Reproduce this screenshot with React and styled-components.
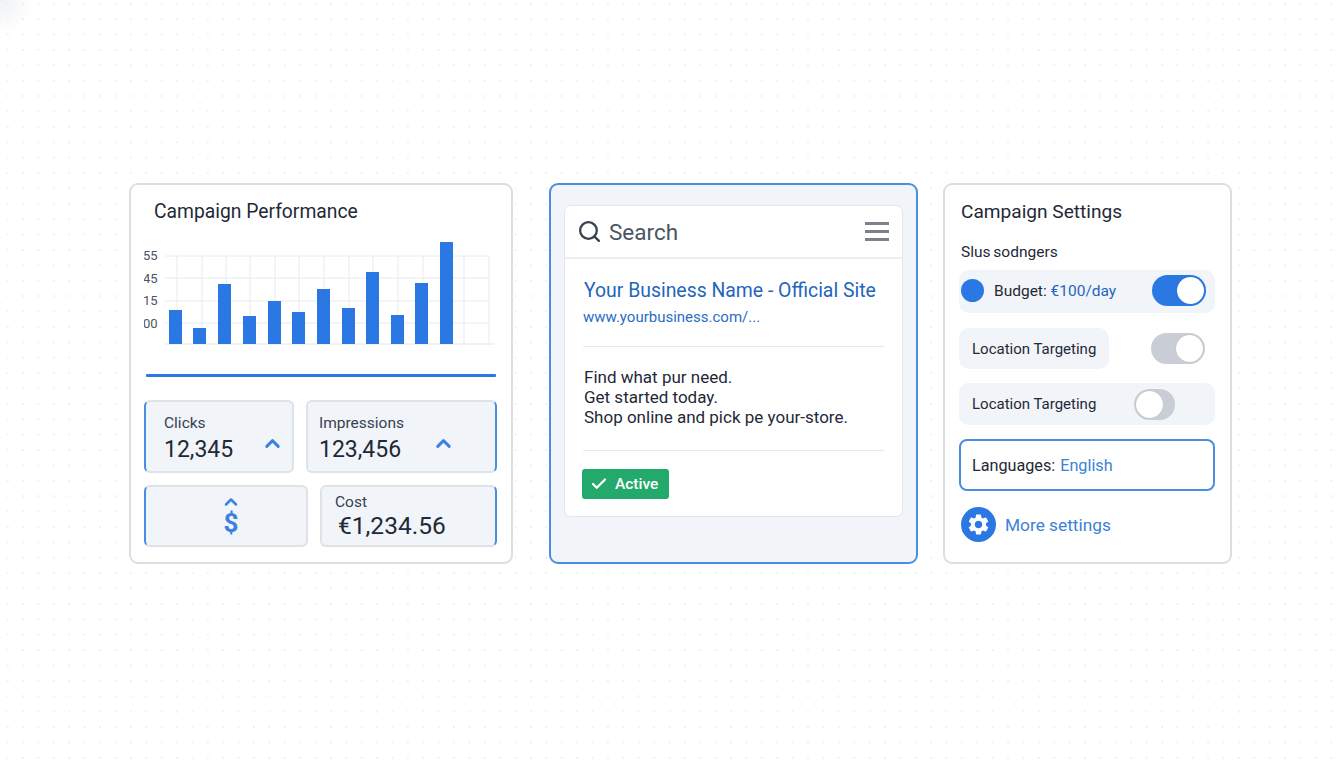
import React from "react";
import styled, { createGlobalStyle } from "styled-components";
import { Search, Check, ChevronUp } from "lucide-react";
import { MdSettings } from "react-icons/md";

const GlobalStyle = createGlobalStyle`
  * { box-sizing: border-box; }
  html, body { margin: 0; padding: 0; }
  body {
    font-family: Roboto, "Liberation Sans", sans-serif;
    background-color: #fff;
    background-image:
      radial-gradient(circle at 0 0, rgba(225, 228, 232, 0.5), rgba(255, 255, 255, 0) 34px),
      radial-gradient(circle, #f0f0f0 0.8px, transparent 1.1px);
    background-size: 100% 100%, 15.4px 15.4px;
    background-position: 0 0, 0 -4px;
  }
`;

const Page = styled.div`
  width: 1344px;
  height: 768px;
  overflow: hidden;
  padding: 183px 0 0 129px;
  display: flex;
  align-items: flex-start;
`;

const Card = styled.section`
  width: ${(p) => p.$width}px;
  height: 381px;
  margin-left: ${(p) => p.$offset || 0}px;
  border: 2px solid ${(p) => (p.$active ? "#4a8ee2" : "#dcdfe2")};
  border-radius: 9px;
  background: ${(p) => (p.$active ? "#f1f4f8" : "#fff")};
`;

const PerformanceCard = styled(Card)`
  padding: 15px 15px 0 13px;
`;

const PreviewCard = styled(Card)`
  padding: 20px 13px 0;
`;

const SettingsCard = styled(Card)`
  padding: 15px 15px 0 14px;
`;

const CardTitle = styled.h2`
  margin: 0 0 0 ${(p) => p.$indent}px;
  font-size: ${(p) => p.$size}px;
  line-height: 24px;
  font-weight: 400;
  color: #1f2937;
`;

const Chart = styled.svg`
  display: block;
  margin-top: 12px;
`;

const BlueRule = styled.div`
  height: 3px;
  width: 350px;
  margin: 26px 0 0 2px;
  background: #2b78e4;
  border-radius: 1px;
`;

const TileRow = styled.div`
  display: grid;
  grid-template-columns: ${(p) => p.$columns};
  gap: 12px;
  margin-top: ${(p) => p.$top}px;
`;

const Tile = styled.div`
  height: ${(p) => p.$height}px;
  background: #f1f4f8;
  border: 2px solid #dfe2e6;
  border-left-color: ${(p) => (p.$side === "left" ? "#4a8ee2" : "#dfe2e6")};
  border-right-color: ${(p) => (p.$side === "right" ? "#4a8ee2" : "#dfe2e6")};
  border-radius: 6px;
  position: relative;
  padding: ${(p) => p.$pad};
`;

const TileLabel = styled.div`
  font-size: 15.5px;
  line-height: 18px;
  color: #374151;
`;

const TileValue = styled.div`
  font-size: ${(p) => p.$size}px;
  line-height: 30px;
  color: #1f2937;
  margin-top: ${(p) => p.$top || 0}px;
  margin-left: ${(p) => p.$indent || 0}px;
`;

const TileChevron = styled.span`
  position: absolute;
  left: ${(p) => p.$left}px;
  top: 30px;
  display: flex;
  color: #3b82e0;
`;

const DollarStack = styled.div`
  height: 100%;
  display: flex;
  flex-direction: column;
  align-items: center;
  color: #3b82e0;
  margin-left: 10px;
`;

const DollarSign = styled.span`
  font-size: 26px;
  line-height: 24px;
  font-weight: 700;
  margin-top: -1px;
`;

const BrowserPanel = styled.div`
  height: 312px;
  background: #fff;
  border: 1px solid #e3e6ea;
  border-radius: 7px;
`;

const SearchBar = styled.div`
  height: 53px;
  display: flex;
  align-items: center;
  padding: 0 13px 0 12px;
  border-bottom: 2px solid #eceef1;
  color: #374151;
`;

const SearchLabel = styled.span`
  flex: 1;
  font-size: 22.5px;
  color: #4b5563;
  margin-left: 7px;
`;

const AdBody = styled.div`
  padding: 19px 18px 0;
`;

const AdTitle = styled.div`
  font-size: 19.4px;
  line-height: 26px;
  color: #1f66bd;
  margin-left: 1px;
  white-space: nowrap;
`;

const AdUrl = styled.div`
  font-size: 15px;
  line-height: 20px;
  color: #2b6cc4;
  margin-top: 3px;
`;

const Divider = styled.hr`
  border: 0;
  height: 1px;
  margin: ${(p) => p.$top}px 0 0;
  background: #e5e7eb;
`;

const AdCopy = styled.p`
  margin: 20px 0 0 1px;
  font-size: 17px;
  line-height: 20px;
  color: #1f2937;
`;

const StatusBadge = styled.div`
  width: 87px;
  height: 30px;
  margin: 18px 0 0 -1px;
  padding-left: 8px;
  display: flex;
  align-items: center;
  gap: 7px;
  border-radius: 3px;
  background: #23a96c;
  color: #fff;
  font-size: 15.5px;
  font-weight: 500;
`;

const SubTitle = styled.div`
  margin: 18px 0 8px 2px;
  font-size: 15.5px;
  line-height: 20px;
  word-spacing: -1px;
  color: #1f2937;
`;

const SettingsStack = styled.div`
  display: flex;
  flex-direction: column;
  gap: 14px;
`;

const SettingRow = styled.div`
  display: flex;
  align-items: center;
  height: ${(p) => p.$height}px;
  margin-bottom: ${(p) => p.$after || 0}px;
  padding-right: ${(p) => p.$inset || 0}px;
  padding-bottom: ${(p) => p.$lift || 0}px;
  border-radius: 10px;
  background: ${(p) => (p.$plain ? "transparent" : "#f1f4f8")};
`;

const SettingPill = styled.div`
  width: ${(p) => p.$width}px;
  height: 100%;
  padding-left: 13px;
  display: flex;
  align-items: center;
  border-radius: 10px;
  background: #f1f4f8;
  font-size: 15px;
  color: #1f2937;
`;

const BudgetDot = styled.span`
  width: 23px;
  height: 23px;
  margin: 0 10px 0 2px;
  border-radius: 50%;
  background: #2b78e4;
`;

const BudgetText = styled.span`
  flex: 1;
  font-size: 15.5px;
  color: #1f2937;
`;

const Accent = styled.span`
  color: ${(p) => p.$color || "#1f66bd"};
`;

const Toggle = styled.span`
  width: ${(p) => p.$width}px;
  height: 31px;
  margin-left: ${(p) => p.$offset || 0}px;
  padding: 2px;
  display: flex;
  justify-content: ${(p) => (p.$on ? "flex-end" : "flex-start")};
  border-radius: 16px;
  background: ${(p) => (p.$blue ? "#2b78e4" : "#c9ced6")};
`;

const Knob = styled.span`
  width: 27px;
  height: 27px;
  border-radius: 50%;
  background: #fff;
  box-shadow: 0 0 1px rgba(0, 0, 0, 0.2);
`;

const LanguageBox = styled.div`
  height: 52px;
  padding-left: 11px;
  display: flex;
  align-items: center;
  gap: 5px;
  border: 2px solid #4a8ee2;
  border-radius: 8px;
  background: #fff;
  font-size: 16.2px;
  color: #1f2937;
`;

const MoreLink = styled.div`
  display: flex;
  align-items: center;
  gap: 9px;
  margin: 2px 0 0 2px;
  font-size: 17.3px;
  color: #3b82d6;
`;

const GearCircle = styled.span`
  width: 35px;
  height: 35px;
  display: flex;
  align-items: center;
  justify-content: center;
  border-radius: 50%;
  background: #2b78e4;
  color: #fff;
`;

const gridX = [33, 58, 82, 106, 131, 155, 180, 205, 229, 254, 279, 320, 345];
const gridY = [20, 42, 65, 87];
const yLabels = [["55", 24], ["45", 47], ["15", 69], ["00", 92]];
const bars = [
  [25, 310], [49, 328], [74, 284], [99, 316], [124, 301], [148, 312],
  [173, 289], [198, 308], [222, 272], [247, 315], [271, 283], [296, 242],
];

function PerformanceChart() {
  return (
    <Chart width="352" height="112" viewBox="0 0 352 112">
      {gridX.map((x) => (
        <line key={x} x1={x} x2={x} y1="20" y2="108" stroke="#e8eaed" />
      ))}
      {gridY.map((y) => (
        <line key={y} x1="21" x2="345" y1={y} y2={y} stroke="#e8eaed" />
      ))}
      <line x1="21" x2="350" y1="108" y2="108" stroke="#e1e4e8" />
      {yLabels.map(([label, y]) => (
        <text key={label} x="-1" y={y} fontSize="13" fill="#4b5563" fontFamily="Roboto">
          {label}
        </text>
      ))}
      {bars.map(([x, top]) => (
        <rect key={x} x={x} y={top - 236} width="13" height={344 - top} fill="#2b78e4" />
      ))}
    </Chart>
  );
}

function MenuLines() {
  return (
    <svg width="24" height="19" viewBox="0 0 24 19" fill="#7b828c">
      <rect y="0" width="24" height="3" />
      <rect y="8" width="24" height="3" />
      <rect y="16" width="24" height="3" />
    </svg>
  );
}

export default function App() {
  return (
    <Page>
      <GlobalStyle />
      <PerformanceCard $width={384}>
        <CardTitle $indent={10} $size={19.3}>Campaign Performance</CardTitle>
        <PerformanceChart />
        <BlueRule />
        <TileRow $columns="150px 191px" $top={23}>
          <Tile $height={73} $side="left" $pad="12px 0 0 18px">
            <TileLabel>Clicks</TileLabel>
            <TileValue $size={23} $top={3}>12,345</TileValue>
            <TileChevron $left={115}>
              <ChevronUp size={23} strokeWidth={3} />
            </TileChevron>
          </Tile>
          <Tile $height={73} $side="right" $pad="12px 0 0 11px">
            <TileLabel>Impressions</TileLabel>
            <TileValue $size={23} $top={3}>123,456</TileValue>
            <TileChevron $left={124}>
              <ChevronUp size={23} strokeWidth={3} />
            </TileChevron>
          </Tile>
        </TileRow>
        <TileRow $columns="164px 177px" $top={12}>
          <Tile $height={62} $side="left" $pad="5px 0 0">
            <DollarStack>
              <ChevronUp size={20} strokeWidth={3} />
              <DollarSign>$</DollarSign>
            </DollarStack>
          </Tile>
          <Tile $height={62} $side="right" $pad="6px 0 0 13px">
            <TileLabel>Cost</TileLabel>
            <TileValue $size={24.5} $indent={3}>€1,234.56</TileValue>
          </Tile>
        </TileRow>
      </PerformanceCard>

      <PreviewCard $width={369} $offset={36} $active>
        <BrowserPanel>
          <SearchBar>
            <Search size={25} strokeWidth={2.2} />
            <SearchLabel>Search</SearchLabel>
            <MenuLines />
          </SearchBar>
          <AdBody>
            <AdTitle>Your Business Name - Official Site</AdTitle>
            <AdUrl>www.yourbusiness.com/...</AdUrl>
            <Divider $top={19} />
            <AdCopy>
              Find what pur need.
              <br />
              Get started today.
              <br />
              Shop online and pick pe your-store.
            </AdCopy>
            <Divider $top={23} />
            <StatusBadge>
              <Check size={18} strokeWidth={3} />
              Active
            </StatusBadge>
          </AdBody>
        </BrowserPanel>
      </PreviewCard>

      <SettingsCard $width={289} $offset={25}>
        <CardTitle $indent={2} $size={19.1}>Campaign Settings</CardTitle>
        <SubTitle>Slus sodngers</SubTitle>
        <SettingsStack>
          <SettingRow $height={43} $after={1} $inset={9} $lift={2}>
            <BudgetDot />
            <BudgetText>
              Budget: <Accent>€100/day</Accent>
            </BudgetText>
            <Toggle $width={54} $on $blue>
              <Knob />
            </Toggle>
          </SettingRow>
          <SettingRow $height={41} $plain>
            <SettingPill $width={150}>Location Targeting</SettingPill>
            <Toggle $width={54} $offset={42} $on>
              <Knob />
            </Toggle>
          </SettingRow>
          <SettingRow $height={42}>
            <SettingPill $width={175}>Location Targeting</SettingPill>
            <Toggle $width={41}>
              <Knob />
            </Toggle>
          </SettingRow>
          <LanguageBox>
            Languages: <Accent $color="#3b82d6">English</Accent>
          </LanguageBox>
          <MoreLink>
            <GearCircle>
              <MdSettings size={25} />
            </GearCircle>
            More settings
          </MoreLink>
        </SettingsStack>
      </SettingsCard>
    </Page>
  );
}
